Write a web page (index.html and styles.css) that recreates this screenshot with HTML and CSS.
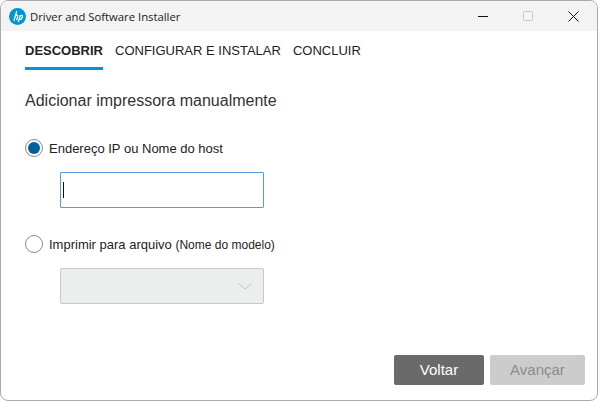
FILE: index.html

```html
<!doctype html>
<html lang="pt">
<head>
 <meta charset="utf-8" />
 <title>Driver and Software Installer</title>
 <link rel="stylesheet" href="styles.css">
</head>
<body>
 <div class="window">
 <div class="titlebar">
 <svg class="logo" width="17" height="17" viewBox="0 0 20 20">
 <circle cx="10" cy="10" r="10" fill="#0096d6"/>
 <path d="M9.200 3.500 5.800 15M7.400 9.400c1-1.200 3.300-1.300 2.900.2L8.900 14.400M13.200 8.600 10.900 16.500M13 9.400c1-.9 3.200-.9 2.800.8-.4 1.800-1.800 3.800-4 3.500" fill="none" stroke="#fff" stroke-width="1.500"/>
 </svg>
 <span class="title">Driver and Software Installer</span>
 <div class="winbtns">
 <svg width="10" height="10" viewBox="0 0 10 10"><path d="M0 5.500H10" stroke="#111" fill="none"/></svg>
 <svg width="10" height="10" viewBox="0 0 10 10"><rect x=".5" y=".5" width="9" height="9" rx="1" fill="none" stroke="#c4c4c4"/></svg>
 <svg width="11" height="11" viewBox="0 0 11 11"><path d="M.5 .5 10.500 10.500M10.500 .5 .5 10.500" stroke="#111" fill="none"/></svg>
 </div>
 </div>

 <div class="content">
 <nav class="tabs">
 <span class="tab active">DESCOBRIR</span>
 <span class="tab">CONFIGURAR E INSTALAR</span>
 <span class="tab">CONCLUIR</span>
 </nav>

 <h1>Adicionar impressora manualmente</h1>

 <div class="option">
 <span class="radio checked"></span>
 <span class="optlabel">Endereço IP ou Nome do host</span>
 </div>
 <div class="field input"><span class="caret"></span></div>

 <div class="option second">
 <span class="radio"></span>
 <span class="optlabel">Imprimir para arquivo <small>(Nome do modelo)</small></span>
 </div>
 <div class="field select">
 <svg width="14" height="7" viewBox="0 0 14 7"><path d="M.5 .5 7 6 13.500 .5" fill="none" stroke="#c2c4c4"/></svg>
 </div>

 <div class="footer">
 <button class="back" type="button">Voltar</button>
 <button class="next" type="button" disabled>Avançar</button>
 </div>
 </div>
 </div>
</body>
</html>
```

FILE: styles.css

```css
*{box-sizing:border-box}
html,body{height:100%}
body{
margin:0;
background:#fff;
color:#222;
font-family:"Liberation Sans",Arial,sans-serif;
}
.window{
width:598px;
height:401px;
border:1px solid #a9a9a9;
border-radius:8px;
overflow:hidden;
display:flex;
flex-direction:column;
background:#fff;
}
.titlebar{
height:30px;
flex:none;
background:#f3f3f3;
display:flex;
align-items:center;
padding-left:8px;
}
.logo{flex:none}
.title{margin-left:4px;font-family:"Open Sans",sans-serif;font-size:11.3px;color:#1a1a1a}
.winbtns{margin-left:auto;display:flex;align-items:center;gap:35px;padding-right:18px}
.content{flex:1;display:flex;flex-direction:column;padding:0 12px 15px 24px}
.tabs{display:flex;gap:12px;margin-top:12px}
.tab{font-size:13px;line-height:16px;padding-bottom:8px;border-bottom:3px solid transparent;color:#222}
.tab.active{font-weight:bold;border-bottom-color:#0096d6}
h1{margin:22px 0 0;font-size:16px;line-height:18px;font-weight:normal;color:#333}
.option{display:flex;align-items:center;gap:6px;margin-top:28px;height:20px}
.option.second{margin-top:26px}
.radio{width:18px;height:18px;border-radius:50%;border:1px solid #8a8a8a;background:#fff;flex:none}
.radio.checked{padding:2px}
.radio.checked::before{content:"";display:block;width:12px;height:12px;border-radius:50%;background:#00609c}
.optlabel{font-size:13px;color:#222}
.optlabel small{font-size:12px}
.field{width:204px;height:36px;margin:14px 0 0 35px;border-radius:1px}
.input{border:1px solid #5b97dc;background:#fff;display:flex;align-items:center;padding-left:2px}
.caret{width:1px;height:16px;background:#111}
.select{
border:1px solid #c8caca;
border-radius:2px;
background:#eceded;
display:flex;
align-items:center;
justify-content:flex-end;
padding-right:11px;
}
.footer{margin-top:auto;display:flex;justify-content:flex-end;gap:6px}
button{
height:30px;
border:0;
border-radius:2px;
padding:0 0 2px;
font-family:inherit;
font-size:15px;
}
.back{width:90px;background:#6a6a6a;color:#fff}
.next{width:95px;background:#cccccc;color:#8c8c8c}
```
